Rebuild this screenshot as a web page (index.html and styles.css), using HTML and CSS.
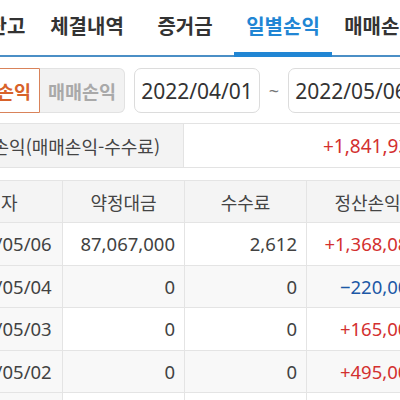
FILE: index.html
```html
<!DOCTYPE html>
<html lang="ko">
<head>
<meta charset="utf-8">
<link rel="stylesheet" href="styles.css">
</head>
<body>
<div class="page">
  <nav class="tabs">
    <div class="tab first">잔고</div>
    <div class="tab">체결내역</div>
    <div class="tab">증거금</div>
    <div class="tab active">일별손익</div>
    <div class="tab">매매손익</div>
  </nav>

  <div class="filters">
    <div class="seg">
      <div class="seg-btn on">일별손익</div>
      <div class="seg-btn off">매매손익</div>
    </div>
    <div class="date">2022/04/01</div>
    <div class="tilde">~</div>
    <div class="date">2022/05/06</div>
  </div>

  <div class="summary">
    <div class="sum-label">실현손익(매매손익-수수료)</div>
    <div class="sum-value up">+1,841,938</div>
  </div>

  <table class="grid">
    <colgroup>
      <col class="c1"><col class="c2"><col class="c3"><col class="c4">
    </colgroup>
    <thead>
      <tr><th class="h1">일자</th><th>약정대금</th><th>수수료</th><th>정산손익</th></tr>
    </thead>
    <tbody>
      <tr><td class="d">2022/05/06</td><td>87,067,000</td><td>2,612</td><td class="up">+1,368,088</td></tr>
      <tr class="alt"><td class="d">2022/05/04</td><td>0</td><td>0</td><td class="down">−220,000</td></tr>
      <tr><td class="d">2022/05/03</td><td>0</td><td>0</td><td class="up">+165,000</td></tr>
      <tr class="alt"><td class="d">2022/05/02</td><td>0</td><td>0</td><td class="up">+495,000</td></tr>
      <tr><td class="d">2022/04/29</td><td>0</td><td>0</td><td class="up">+33,850</td></tr>
    </tbody>
  </table>
</div>
</body>
</html>
```

FILE: styles.css
```css
html, body {
  margin: 0;
  padding: 0;
  background: #ffffff;
}
body {
  font-family: "Noto Sans", "Noto Sans CJK KR", sans-serif;
  color: #3a3a3a;
  overflow: hidden;
  width: 400px;
  height: 400px;
}
.page {
  width: 400px;
  overflow: hidden;
}

/* Tabs */
.tabs {
  display: flex;
  height: 55px;
  border-bottom: 2px solid #4b8fc6;
  margin-left: -24px;
  width: 520px;
}
.tab {
  flex: 0 0 98px;
  display: flex;
  align-items: center;
  justify-content: center;
  font-family: "Noto Sans CJK KR", sans-serif;
  font-size: 20px;
  font-weight: 700;
  color: #333333;
  padding-bottom: 5px;
  box-sizing: border-box;
  position: relative;
}
.tab.first {
  flex-basis: 62px;
}
.tab.active {
  color: #2186d4;
}
.tab.active::after {
  content: "";
  position: absolute;
  left: 0;
  right: 0;
  bottom: -2px;
  height: 5px;
  background: #2186d4;
}

/* Filters */
.filters {
  display: flex;
  align-items: center;
  margin-top: 11px;
  margin-left: -46px;
  height: 45px;
  width: 520px;
}
.seg {
  display: flex;
  height: 45px;
}
.seg-btn {
  width: 86px;
  display: flex;
  align-items: center;
  justify-content: center;
  font-family: "Noto Sans CJK KR", sans-serif;
  font-size: 18.5px;
  font-weight: 700;
  box-sizing: border-box;
}
.seg-btn.on {
  color: #d8622a;
  background: #ffffff;
  border: 1px solid #d9835a;
  border-radius: 6px 0 0 6px;
}
.seg-btn.off {
  width: 85px;
  color: #a9a9a9;
  background: #f2f2f2;
  border: 1px solid #e2e2e2;
  border-left: none;
  border-radius: 0 6px 6px 0;
}
.date {
  margin-left: 9px;
  width: 126px;
  height: 45px;
  box-sizing: border-box;
  border: 1px solid #dcdcdc;
  border-radius: 7px;
  display: flex;
  align-items: center;
  justify-content: center;
  font-size: 21px;
  color: #333333;
}
.tilde {
  width: 28px;
  margin-left: 0;
  margin-right: -9px;
  text-align: center;
  font-size: 18px;
  color: #777777;
}

/* Summary */
.summary {
  display: flex;
  margin-top: 10px;
  height: 45px;
  border-top: 1px solid #e3e3e3;
  border-bottom: 1px solid #e3e3e3;
  box-sizing: border-box;
  margin-left: -60px;
  width: 560px;
}
.sum-label {
  width: 244px;
  background: #f3f3f3;
  border-right: 1px solid #e3e3e3;
  display: flex;
  align-items: center;
  justify-content: flex-end;
  padding-right: 23px;
  box-sizing: border-box;
  font-family: "Noto Sans CJK KR", sans-serif;
  font-size: 18px;
  color: #444444;
}
.sum-value {
  flex: 1;
  display: flex;
  align-items: center;
  padding-left: 139px;
  font-size: 19px;
}

.up { color: #d3302f; }
.down { color: #1d58a6; }

/* Table */
.grid {
  margin-top: 12px;
  margin-left: -50px;
  border-collapse: collapse;
  table-layout: fixed;
  width: 478px;
}
col.c1 { width: 112px; }
col.c2 { width: 122px; }
col.c3 { width: 122px; }
col.c4 { width: 122px; }
.grid th, .grid td {
  border: 1px solid #e4e4e4;
  padding: 0 9px 0 0;
  white-space: nowrap;
  overflow: hidden;
}
.grid th {
  height: 41px;
  background: #f4f4f4;
  font-family: "Noto Sans CJK KR", sans-serif;
  font-weight: 400;
  font-size: 18px;
  color: #444444;
  text-align: center;
  padding: 0;
}
.grid th.h1 {
  padding-right: 11px;
}
.grid td {
  height: 41.5px;
  font-size: 18.5px;
  text-align: right;
  color: #424242;
}
.grid td.d {
  text-align: center;
  padding: 0 8px 0 0;
  background: #f8f8f8;
  color: #424242;
}
.grid td.up { color: #d3302f; }
.grid td.down { color: #1d58a6; }
.grid tr.alt td {
  background: #f8f8f8;
}
```
